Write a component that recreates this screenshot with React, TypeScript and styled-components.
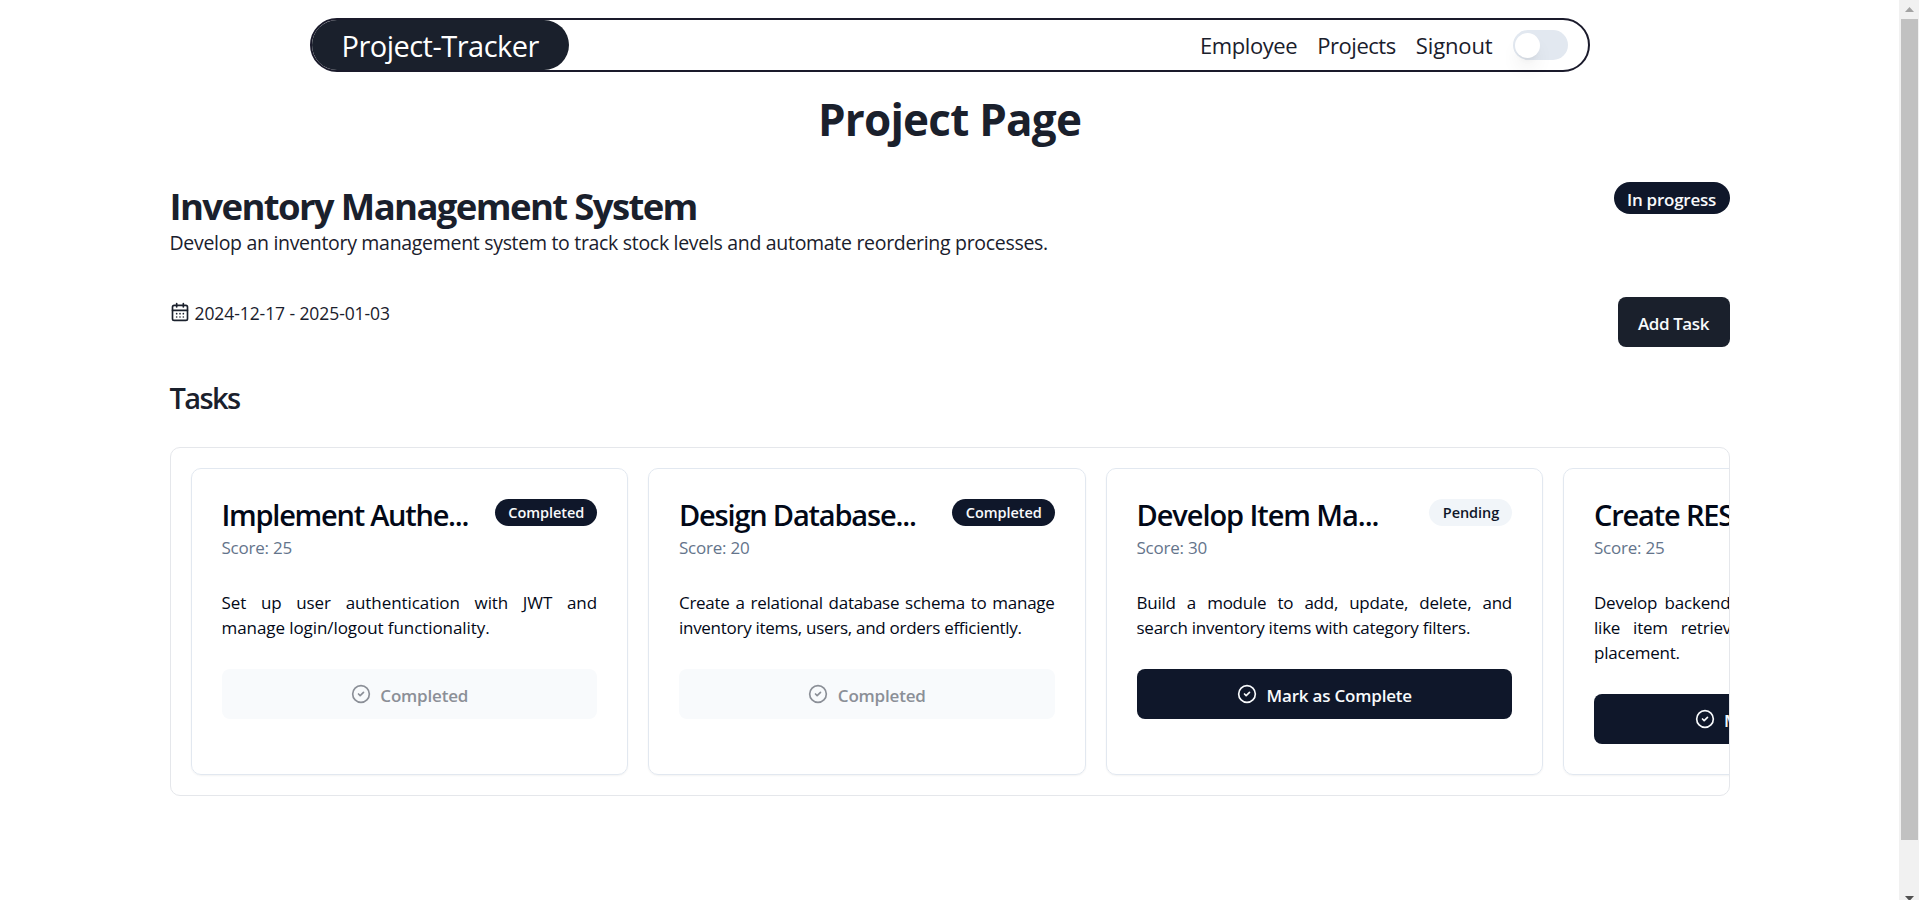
import React from "react";
import styled, { createGlobalStyle, css } from "styled-components";
import { CalendarDays, CircleCheck } from "lucide-react";

const GlobalStyle = createGlobalStyle`
  *, *::before, *::after { box-sizing: border-box; }
  html, body { margin: 0; height: 100%; overflow: hidden; background: #fff; }
  body {
    font-family: "Open Sans", "Noto Sans", sans-serif;
    color: #1a202c;
  }
  h1, h2, h3, p { margin: 0; }
  button { font-family: inherit; border: 0; }
`;

const Viewport = styled.div`
  display: grid;
  grid-template-columns: 1fr 20px;
  height: 900px;
  overflow: hidden;
`;

const Page = styled.div`
  min-width: 0;
  overflow: hidden;
`;

const Nav = styled.nav`
  display: flex;
  align-items: stretch;
  justify-content: space-between;
  width: 1280px;
  height: 54px;
  margin: 18px auto 0;
  border: 2px solid #1a1a2b;
  border-radius: 27px;
`;

const Brand = styled.a`
  display: flex;
  align-items: center;
  width: 257px;
  padding: 1px 0 0 30px;
  border-radius: 25px;
  background: #1a202c;
  color: #fff;
  font-size: 29px;
  line-height: 48px;
  letter-spacing: -0.52px;
`;

const NavLinks = styled.div`
  display: flex;
  align-items: center;
  gap: 20px;
  padding-right: 20px;
`;

const NavLink = styled.a<{ $tracking: number }>`
  padding-bottom: 1px;
  font-size: 22px;
  line-height: 30px;
  letter-spacing: ${(p) => p.$tracking}px;
`;

const Switch = styled.button`
  display: flex;
  align-items: center;
  width: 55px;
  height: 30px;
  padding: 0 2px;
  border-radius: 15px;
  background: #e2e8f0;
`;

const Thumb = styled.span`
  width: 25px;
  height: 25px;
  border-radius: 50%;
  background: #fff;
  box-shadow: 0 12px 19px -4px rgba(0, 0, 0, 0.1), 0 5px 7px -5px rgba(0, 0, 0, 0.1);
`;

const PageTitle = styled.h1`
  margin-top: 22px;
  text-align: center;
  font-size: 44px;
  font-weight: 700;
  line-height: 50px;
  letter-spacing: -0.77px;
`;

const Main = styled.main`
  width: 1560px;
  margin: 38px auto 0;
`;

const Row = styled.div`
  display: flex;
  align-items: flex-start;
  justify-content: space-between;
`;

const ProjectName = styled.h2`
  padding-top: 1px;
  font-size: 36.5px;
  font-weight: 700;
  line-height: 46px;
  letter-spacing: -1.63px;
`;

const ProjectSummary = styled.p`
  font-size: 19.5px;
  line-height: 28px;
  letter-spacing: -0.307px;
`;

const ActionRow = styled(Row)`
  margin-top: 40px;
`;

const Dates = styled.div`
  display: flex;
  align-items: center;
  gap: 5px;
  height: 30px;
  font-size: 17.5px;
  letter-spacing: -0.084px;

  svg { display: block; }
`;

const Label = styled.span<{ $drop?: number }>`
  display: block;
  line-height: 1;
  padding-top: ${(p) => p.$drop ?? 3}px;
`;

const Badge = styled.span<{ $tone: "solid" | "muted"; $large?: boolean }>`
  flex: none;
  display: flex;
  align-items: center;
  justify-content: center;
  border-radius: 999px;
  font-weight: 600;
  ${(p) =>
    p.$tone === "solid"
      ? css`background: #0f172a; color: #f8fafc;`
      : css`background: #f1f5f9; color: #0f172a;`}
  ${(p) =>
    p.$large
      ? css`height: 32px; width: 116px; font-size: 17px; letter-spacing: -0.25px;`
      : css`height: 27px; padding: 0 12.8px 0 13.7px; font-size: 14.5px; letter-spacing: -0.06px;`}
`;

const AddButton = styled.button`
  display: flex;
  align-items: center;
  justify-content: center;
  width: 112px;
  height: 50px;
  padding: 0;
  border-radius: 8px;
  background: #1a202c;
  color: #f8fafc;
  font-size: 17px;
  font-weight: 600;
  letter-spacing: -0.4px;
`;

const SectionTitle = styled.h2`
  margin-top: 31px;
  font-size: 29px;
  font-weight: 600;
  line-height: 40px;
  letter-spacing: -1.6px;
`;

const TaskScroller = styled.section`
  display: flex;
  gap: 20px;
  height: 349px;
  margin-top: 29px;
  padding: 20px;
  border: 1px solid #e5e7eb;
  border-radius: 10px;
  overflow: hidden;
`;

const TaskCard = styled.article`
  flex: 0 0 437.5px;
  padding: 30px;
  border: 1px solid #e2e8f0;
  border-radius: 10px;
  box-shadow: 0 1px 2px rgba(0, 0, 0, 0.05);
  color: #020817;
`;

const TaskTitle = styled.h3<{ $tracking: number }>`
  font-size: 29px;
  font-weight: 600;
  line-height: 32px;
  letter-spacing: ${(p) => p.$tracking}px;
  white-space: nowrap;
`;

const Score = styled.p`
  margin-top: 4px;
  color: #64748b;
  font-size: 17px;
  line-height: 25px;
  letter-spacing: -0.22px;
`;

const TaskText = styled.p<{ $tracking: number }>`
  margin-top: 30px;
  font-size: 17px;
  line-height: 25px;
  letter-spacing: ${(p) => p.$tracking}px;
  text-align: justify;
`;

const TaskButton = styled.button<{ $done: boolean }>`
  display: flex;
  align-items: center;
  justify-content: center;
  gap: 9.5px;
  width: 100%;
  height: 50px;
  margin-top: 29px;
  padding: 0 0 0 0.5px;
  border-radius: 8px;
  background: ${(p) => (p.$done ? "#f8fafc" : "#0f172a")};
  color: ${(p) => (p.$done ? "#8b8f97" : "#f8fafc")};
  font-size: 17px;
  font-weight: 600;
  letter-spacing: -0.2px;
`;

const Scrollbar = styled.aside`
  display: flex;
  flex-direction: column;
  align-items: center;
  height: 900px;
  padding: 7px 1px 0 2px;
  background: #f1f1f1;
`;

const Arrow = styled.svg`
  flex: none;
  display: block;
`;

const ScrollThumb = styled.div`
  width: 17px;
  height: 821px;
  margin: 7px 0 56px;
  flex: none;
  background: #c1c1c1;
`;

type Task = {
  title: string;
  titleTracking: number;
  score: number;
  text: string;
  textTracking: number;
  done: boolean;
};

const tasks: Task[] = [
  {
    title: "Implement Authe...",
    titleTracking: -1.25,
    score: 25,
    text: "Set up user authentication with JWT and manage login/logout functionality.",
    textTracking: -0.075,
    done: true,
  },
  {
    title: "Design Database...",
    titleTracking: -1.19,
    score: 20,
    text: "Create a relational database schema to manage inventory items, users, and orders efficiently.",
    textTracking: -0.285,
    done: true,
  },
  {
    title: "Develop Item Ma...",
    titleTracking: -1.07,
    score: 30,
    text: "Build a module to add, update, delete, and search inventory items with category filters.",
    textTracking: -0.25,
    done: false,
  },
  {
    title: "Create RESTful A...",
    titleTracking: -1.18,
    score: 25,
    text: "Develop backend endpoints for key operations like item retrieval, cart updates, and order placement.",
    textTracking: -0.22,
    done: false,
  },
];

export default function App() {
  return (
    <Viewport>
      <GlobalStyle />
      <Page>
        <Nav>
          <Brand>Project-Tracker</Brand>
          <NavLinks>
            <NavLink $tracking={-0.42}>Employee</NavLink>
            <NavLink $tracking={-0.46}>Projects</NavLink>
            <NavLink $tracking={-0.13}>Signout</NavLink>
            <Switch aria-label="Toggle theme"><Thumb /></Switch>
          </NavLinks>
        </Nav>
        <PageTitle>Project Page</PageTitle>
        <Main>
          <Row>
            <div>
              <ProjectName>Inventory Management System</ProjectName>
              <ProjectSummary>
                Develop an inventory management system to track stock levels and automate reordering processes.
              </ProjectSummary>
            </div>
            <Badge $tone="solid" $large><Label>In progress</Label></Badge>
          </Row>
          <ActionRow>
            <Dates>
              <CalendarDays size={20} />
              <Label $drop={4}>2024-12-17 - 2025-01-03</Label>
            </Dates>
            <AddButton><Label>Add Task</Label></AddButton>
          </ActionRow>
          <SectionTitle>Tasks</SectionTitle>
          <TaskScroller>
            {tasks.map((task) => (
              <TaskCard key={task.title}>
                <Row>
                  <TaskTitle $tracking={task.titleTracking}>{task.title}</TaskTitle>
                  <Badge $tone={task.done ? "solid" : "muted"}>
                    <Label $drop={2}>{task.done ? "Completed" : "Pending"}</Label>
                  </Badge>
                </Row>
                <Score>Score: {task.score}</Score>
                <TaskText $tracking={task.textTracking}>{task.text}</TaskText>
                <TaskButton $done={task.done}>
                  <CircleCheck size={20} />
                  <Label>{task.done ? "Completed" : "Mark as Complete"}</Label>
                </TaskButton>
              </TaskCard>
            ))}
          </TaskScroller>
        </Main>
      </Page>
      <Scrollbar>
        <Arrow width="9" height="5" viewBox="0 0 9 5"><path d="M4.5 0 9 5H0z" fill="#a3a3a3" /></Arrow>
        <ScrollThumb />
        <Arrow width="9" height="5" viewBox="0 0 9 5"><path d="M0 0h9L4.5 5z" fill="#505050" /></Arrow>
      </Scrollbar>
    </Viewport>
  );
}
